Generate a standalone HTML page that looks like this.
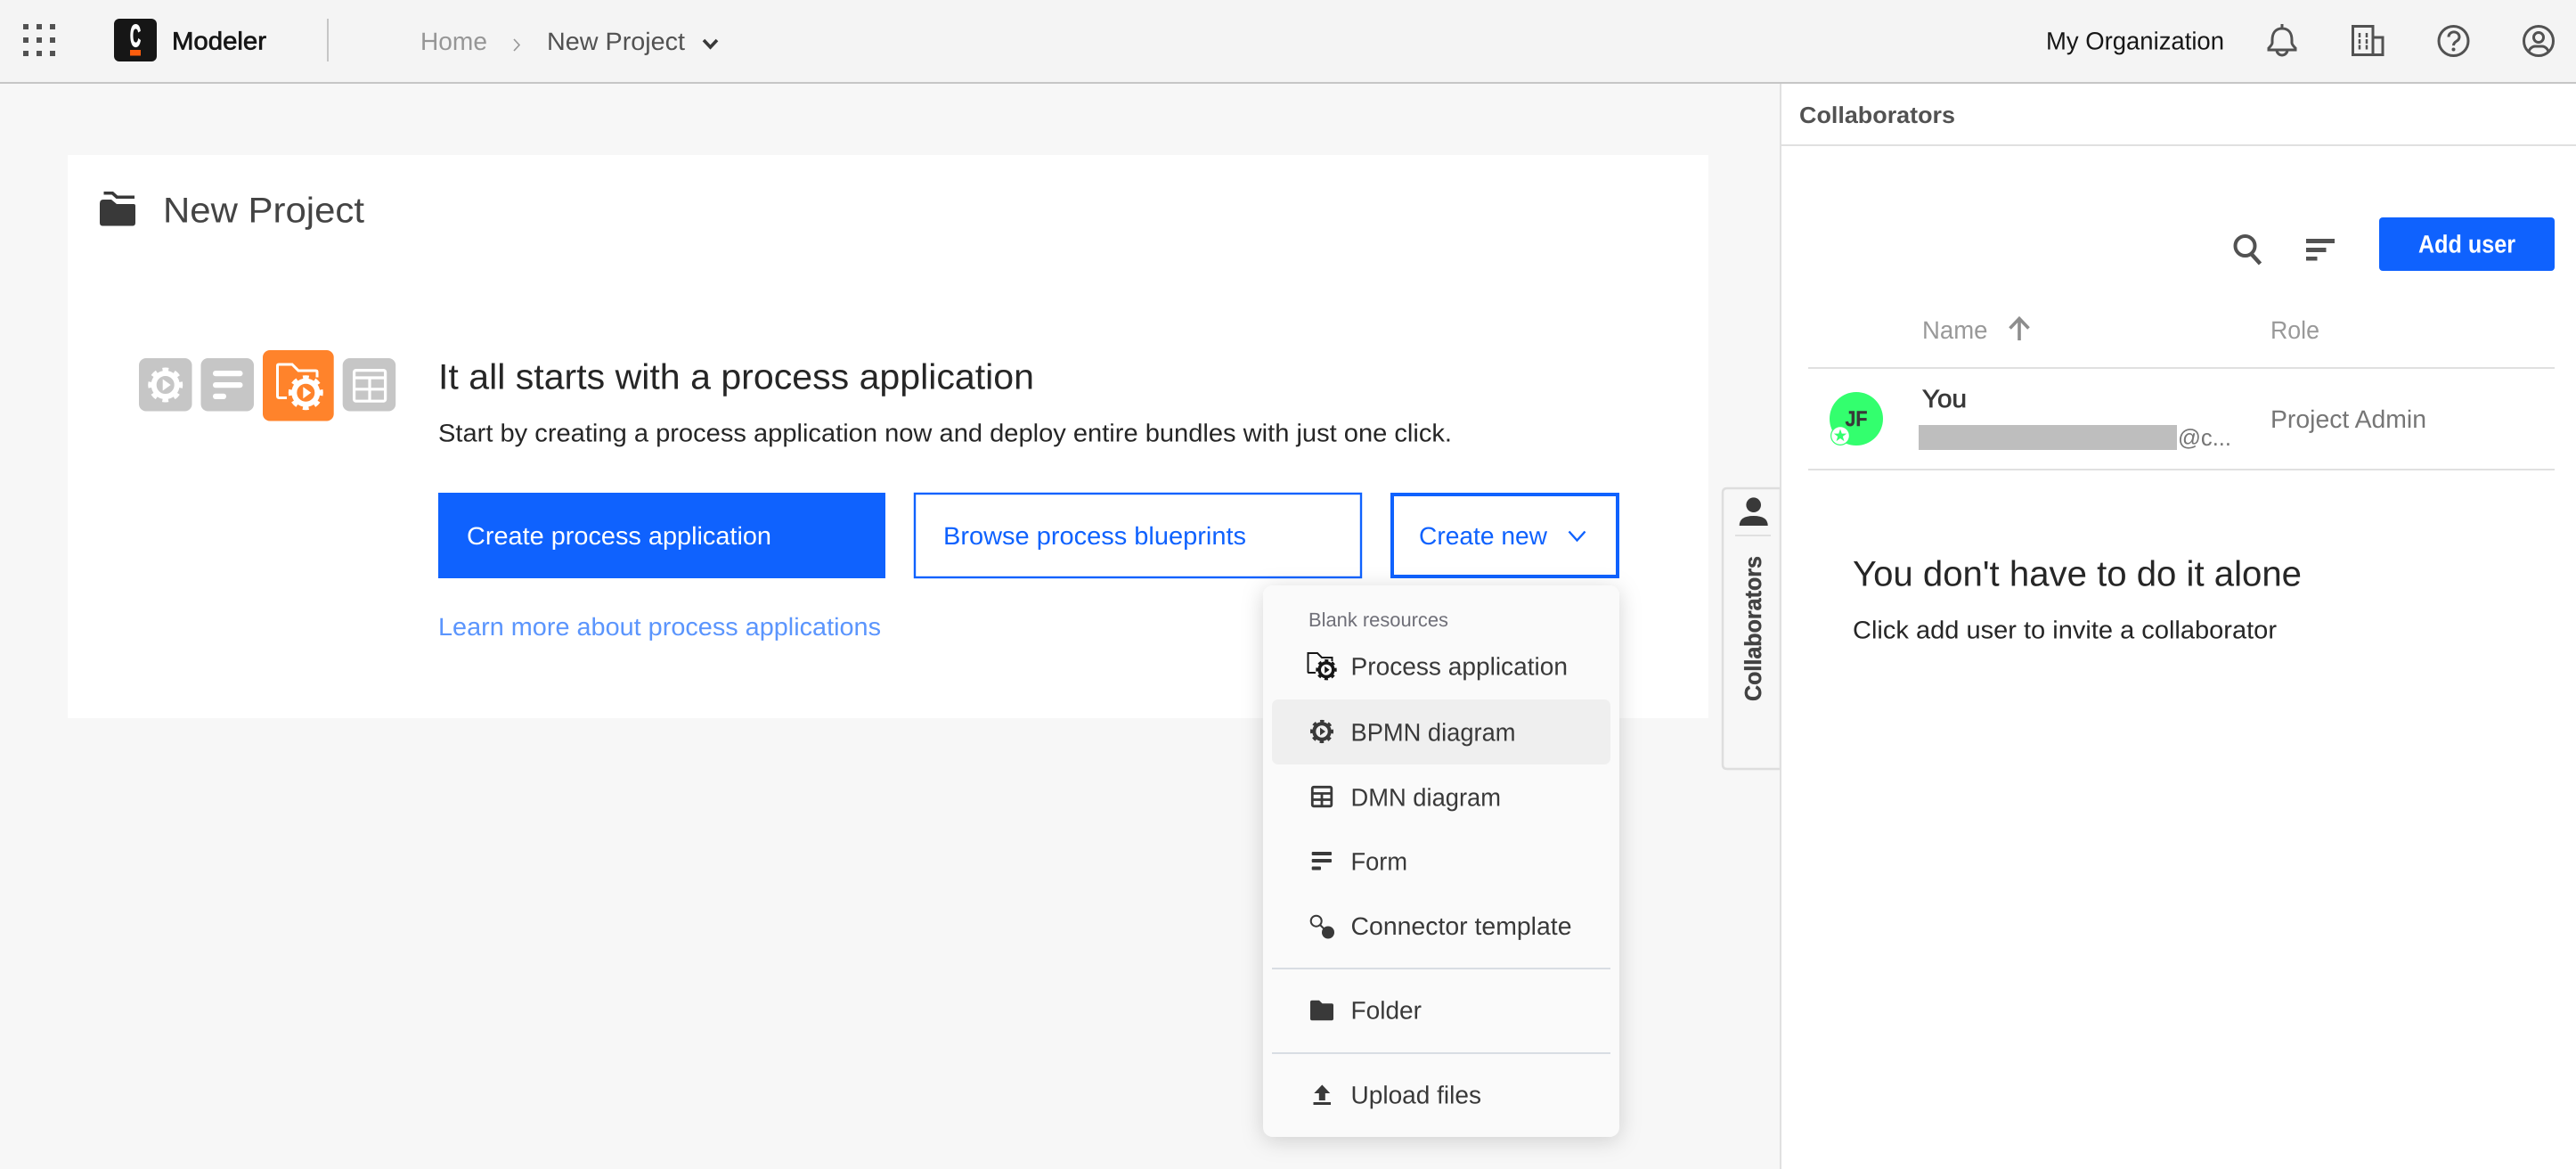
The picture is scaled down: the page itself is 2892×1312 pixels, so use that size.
<!DOCTYPE html>
<html lang="en">
<head>
<meta charset="utf-8">
<title>Modeler - New Project</title>
<style>
html,body{margin:0;padding:0;width:2892px;height:1312px;overflow:hidden;background:#f7f7f7}
svg{display:block;position:absolute;left:0;top:0}
text{font-family:"Liberation Sans",Arial,sans-serif;font-size:28px;text-rendering:geometricPrecision}
.med{stroke-width:.7px;stroke:currentColor}
</style>
</head>
<body>
<svg xmlns="http://www.w3.org/2000/svg" width="2892" height="1312" viewBox="0 0 2892 1312">
<defs>
<g id="gear" fill="none" stroke="currentColor">
<circle r="13" stroke-width="6"/>
<circle r="17" stroke-width="5" stroke-dasharray="6.500 6.850" transform="rotate(-11)"/>
<path d="M-3-6.500 6 0-3 6.500z" fill="currentColor" stroke="none"/>
</g>
<filter id="shadow" x="-20%" y="-20%" width="140%" height="140%">
<feDropShadow dx="0" dy="4" stdDeviation="12" flood-color="#000" flood-opacity=".17"/>
</filter>
</defs>

<!-- page background -->
<rect width="2892" height="1312" fill="#f7f7f7"/>

<!-- top bar -->
<rect width="2892" height="92" fill="#f4f4f4"/>
<rect y="92" width="2892" height="2" fill="#c6c6c6"/>
<g fill="#525252">
<rect x="26" y="27" width="6" height="6"/><rect x="41" y="27" width="6" height="6"/><rect x="56" y="27" width="6" height="6"/>
<rect x="26" y="42" width="6" height="6"/><rect x="41" y="42" width="6" height="6"/><rect x="56" y="42" width="6" height="6"/>
<rect x="26" y="57" width="6" height="6"/><rect x="41" y="57" width="6" height="6"/><rect x="56" y="57" width="6" height="6"/>
</g>
<rect x="128" y="21" width="48" height="48" rx="6" fill="#161616"/>
<text transform="translate(146 52) scale(1 1.45)" style="font-size:24px;stroke:#fff;stroke-width:1px" font-weight="700" fill="#fff" textLength="12" lengthAdjust="spacingAndGlyphs">C</text>
<rect x="146" y="56" width="12" height="6.500" fill="#fc5d0d"/>
<text class="med" x="193" y="55.500" fill="#161616" color="#161616" textLength="106" lengthAdjust="spacingAndGlyphs">Modeler</text>
<rect x="367" y="21" width="2" height="48" fill="#c6c6c6"/>
<text x="472" y="56" fill="#969696" textLength="75" lengthAdjust="spacingAndGlyphs">Home</text>
<path d="M577 44l6 6.500-6 6.500" fill="none" stroke="#969696" stroke-width="1.600"/>
<text x="614" y="56" fill="#525252" textLength="155" lengthAdjust="spacingAndGlyphs">New Project</text>
<path d="M790 45l7.500 8 7.500-8" fill="none" stroke="#393939" stroke-width="3.600"/>

<text x="2297" y="55.500" fill="#161616" textLength="200" lengthAdjust="spacingAndGlyphs">My Organization</text>
<g fill="none" stroke="#525252" stroke-width="3">
<path d="M2562 32c-8 0-11 6-11 13v3c0 2-2 4-4 6v2h30v-2c-2-2-4-4-4-6v-3c0-7-3-13-11-13zM2562 27v5M2556 56a6 6 0 0 0 12 0"/>
<path d="M2641.500 29.500h22.500v32h-22.500zM2664 42h11v19.500h-11z"/>
<path d="M2649 37v5M2657 37v5M2649 44v5M2657 44v5M2649 50.500v5M2657 50.500v5" stroke-width="2.500"/>
<circle cx="2754.500" cy="46" r="16.500"/>
<path d="M2749 41.500a6 5.500 0 1 1 9 4.600c-2 1.300-3.500 2.500-3.500 5"/>
<circle cx="2850" cy="46" r="16.500"/>
<circle cx="2850" cy="42" r="5.500"/>
<path d="M2839 59c0-4 4-7 7-7h8c3 0 7 3 7 7"/>
</g>
<circle cx="2754.500" cy="55.500" r="2" fill="#525252"/>

<!-- main card -->
<rect x="76" y="174" width="1842" height="632" fill="#fff"/>
<path fill="#393939" d="M116.500 215h10.500l5 4.500h19v3.500h-20.500l-5-4.500h-9zM112 228.500q0-4.500 4-4.500h9l6 5h19q2 0 2 2v19q0 3.500-3 3.500h-34q-3 0-3-3.500z"/>
<text x="183" y="249.500" style="font-size:40px" fill="#444" textLength="226" lengthAdjust="spacingAndGlyphs">New Project</text>

<!-- resource icons -->
<rect x="156" y="402" width="59.500" height="59.500" rx="8" fill="#c6c6c6"/>
<use href="#gear" transform="translate(185.700 432)" color="#fff"/>
<rect x="225.500" y="402" width="59.500" height="59.500" rx="8" fill="#c6c6c6"/>
<g fill="#fff">
<rect x="239" y="416" width="33.500" height="6.300" rx="3"/>
<rect x="239" y="429" width="33.500" height="6.300" rx="3"/>
<rect x="239" y="441.700" width="15" height="6.300" rx="3"/>
</g>
<rect x="295" y="393" width="79.700" height="79.500" rx="8" fill="#ff832b"/>
<path d="M322 446.500h-8.500q-2 0-2-2v-34q0-1.500 1.500-1.500h15l7 7h19.500q1.500 0 1.500 1.500v6" fill="none" stroke="#fff" stroke-width="3"/>
<use href="#gear" transform="translate(343.300 440.700)" color="#fff"/>
<rect x="384.700" y="402" width="59.500" height="59.500" rx="8" fill="#c6c6c6"/>
<g fill="none" stroke="#fff" stroke-width="3.200">
<rect x="397.600" y="415.600" width="35" height="34.600" rx="2"/>
<path d="M398 424h35M398 436.800h35M415 424v26"/>
</g>

<!-- card text -->
<text x="492" y="436.500" style="font-size:40px" fill="#262626" textLength="669" lengthAdjust="spacingAndGlyphs">It all starts with a process application</text>
<text x="492" y="495.500" fill="#262626" textLength="1138" lengthAdjust="spacingAndGlyphs">Start by creating a process application now and deploy entire bundles with just one click.</text>

<rect x="492" y="553" width="502" height="96" fill="#0f62fe"/>
<text x="524" y="611" fill="#fff" textLength="342" lengthAdjust="spacingAndGlyphs">Create process application</text>
<rect x="1027" y="554" width="501" height="94" fill="#fff" stroke="#0f62fe" stroke-width="2.400"/>
<text x="1059" y="611" fill="#0f62fe" textLength="340" lengthAdjust="spacingAndGlyphs">Browse process blueprints</text>
<rect x="1563" y="555" width="253" height="92" fill="#fff" stroke="#0f62fe" stroke-width="4"/>
<text x="1593" y="611" fill="#0f62fe" textLength="144" lengthAdjust="spacingAndGlyphs">Create new</text>
<path d="M1761.500 596.500l9 10 9-10" fill="none" stroke="#0f62fe" stroke-width="2.400"/>
<text x="492" y="713" fill="#5b95fd" textLength="497" lengthAdjust="spacingAndGlyphs">Learn more about process applications</text>

<!-- collaborators tab -->
<path d="M1999 548h-60q-5 0-5 5v305q0 5 5 5h60z" fill="#f7f7f7" stroke="#dedede" stroke-width="2.500"/>
<g fill="#393939">
<circle cx="1968.700" cy="566.700" r="8.300"/>
<path d="M1952.700 590q0-11 16-11t16 11z"/>
</g>
<rect x="1948" y="600" width="40" height="2" fill="#e0e0e0"/>
<text transform="translate(1977 787) rotate(-90)" style="font-size:26px;stroke:#424242;stroke-width:.4px" font-weight="700" fill="#424242" textLength="163" lengthAdjust="spacingAndGlyphs">Collaborators</text>

<!-- right panel -->
<rect x="1998" y="94" width="2" height="1218" fill="#e0e0e0"/>
<rect x="2000" y="94" width="892" height="1218" fill="#fff"/>
<rect x="2000" y="162" width="892" height="2" fill="#e0e0e0"/>
<text x="2020" y="138" style="font-size:26px" font-weight="700" fill="#525252" textLength="175" lengthAdjust="spacingAndGlyphs">Collaborators</text>

<circle cx="2520.500" cy="276" r="11" fill="none" stroke="#525252" stroke-width="4"/>
<path d="M2527.500 285l10 11" stroke="#525252" stroke-width="4.500" fill="none"/>
<g fill="#525252">
<rect x="2589" y="268" width="32" height="5"/>
<rect x="2589" y="278" width="22.500" height="5"/>
<rect x="2589" y="288" width="12.500" height="4.500"/>
</g>
<rect x="2671" y="244" width="197" height="60" rx="4" fill="#0f62fe"/>
<text x="2715" y="283.500" font-weight="700" fill="#fff" textLength="109" lengthAdjust="spacingAndGlyphs">Add user</text>

<text x="2158" y="380" fill="#999" textLength="73.500" lengthAdjust="spacingAndGlyphs">Name</text>
<path d="M2267 382v-24M2256.500 368.500l10.500-11 10.500 11" fill="none" stroke="#8d8d8d" stroke-width="3.600"/>
<text x="2549" y="380" fill="#999" textLength="55" lengthAdjust="spacingAndGlyphs">Role</text>
<rect x="2030" y="412" width="838" height="2" fill="#e0e0e0"/>

<circle cx="2084" cy="470" r="30" fill="#33ff6e"/>
<text x="2071.500" y="478" style="font-size:24px;stroke:#393939;stroke-width:.4px" font-weight="700" fill="#393939" textLength="25" lengthAdjust="spacingAndGlyphs">JF</text>
<circle cx="2066" cy="489" r="11" fill="#33ff6e"/>
<circle cx="2066" cy="489" r="9.800" fill="#fff"/>
<polygon transform="translate(2066 489)" fill="#33ff6e" points="0,-7.500 1.760,-2.430 7.130,-2.320 2.850,.93 4.410,6.070 0,3 -4.410,6.070 -2.850,.93 -7.130,-2.320 -1.760,-2.430"/>
<text class="med" x="2158" y="457" fill="#393939" color="#393939" textLength="50" lengthAdjust="spacingAndGlyphs">You</text>
<rect x="2154" y="477" width="290" height="28" fill="#bebebe"/>
<text x="2445" y="500" style="font-size:26px" fill="#767676" textLength="60" lengthAdjust="spacingAndGlyphs">@c...</text>
<text x="2549" y="480" fill="#767676" textLength="175" lengthAdjust="spacingAndGlyphs">Project Admin</text>
<rect x="2030" y="526" width="838" height="2" fill="#e0e0e0"/>

<text x="2080" y="657.500" style="font-size:40px" fill="#262626" textLength="504" lengthAdjust="spacingAndGlyphs">You don't have to do it alone</text>
<text x="2080" y="716.500" fill="#262626" textLength="476" lengthAdjust="spacingAndGlyphs">Click add user to invite a collaborator</text>

<!-- dropdown menu -->
<rect x="1418" y="657" width="400" height="619" rx="11" fill="#fafafa" filter="url(#shadow)"/>
<text x="1469" y="703" style="font-size:22px" fill="#6f6f78" textLength="157" lengthAdjust="spacingAndGlyphs">Blank resources</text>
<rect x="1428" y="785" width="380" height="73" rx="7" fill="#efefef"/>
<g fill="#393939">
<text x="1516.500" y="757.500" textLength="243.500" lengthAdjust="spacingAndGlyphs">Process application</text>
<text x="1516.500" y="831.500" textLength="185" lengthAdjust="spacingAndGlyphs">BPMN diagram</text>
<text x="1516.500" y="904.500" textLength="168.500" lengthAdjust="spacingAndGlyphs">DMN diagram</text>
<text x="1516.500" y="976.500" textLength="63.500" lengthAdjust="spacingAndGlyphs">Form</text>
<text x="1516.500" y="1049" textLength="248" lengthAdjust="spacingAndGlyphs">Connector template</text>
<text x="1516.500" y="1143.500" textLength="79.500" lengthAdjust="spacingAndGlyphs">Folder</text>
<text x="1516.500" y="1238.500" textLength="146.500" lengthAdjust="spacingAndGlyphs">Upload files</text>
</g>
<rect x="1428" y="1086" width="380" height="2" fill="#d8dde3"/>
<rect x="1428" y="1181" width="380" height="2" fill="#d8dde3"/>

<!-- menu icons -->
<path d="M1477 755h-7.500q-1 0-1-1v-21h10.500l5 5h11.500v4" fill="none" stroke="#161616" stroke-width="2"/>
<use href="#gear" transform="translate(1489 751.700) scale(.6)" color="#161616"/>
<use href="#gear" transform="translate(1484 821) scale(.67)" color="#393939"/>
<g fill="none" stroke="#393939" stroke-width="2.800">
<rect x="1473.300" y="883.300" width="21.500" height="21.500" rx="1.500"/>
<path d="M1473 890.500h22M1473 897.500h22M1484 890v15"/>
</g>
<g fill="#393939">
<rect x="1472.700" y="956" width="22.300" height="4" rx="1"/>
<rect x="1472.700" y="964" width="22.300" height="4" rx="1"/>
<rect x="1472.700" y="972.500" width="10.300" height="4" rx="1"/>
<circle cx="1491" cy="1046.500" r="7"/>
<path d="M1473 1122.700h8l3.500 3.500h10.500q2 0 2 2v15q0 2-2 2h-22q-2 0-2-2v-18.500q0-2 2-2z"/>
<path d="M1484.300 1217.500l9 9.500h-5.500v8h-7v-8h-5.500z"/>
<rect x="1474.500" y="1237" width="19.500" height="3"/>
</g>
<circle cx="1477.700" cy="1033.700" r="6" fill="none" stroke="#393939" stroke-width="2"/>
<path d="M1482 1038l6 6" stroke="#393939" stroke-width="2"/>
</svg>
</body>
</html>
